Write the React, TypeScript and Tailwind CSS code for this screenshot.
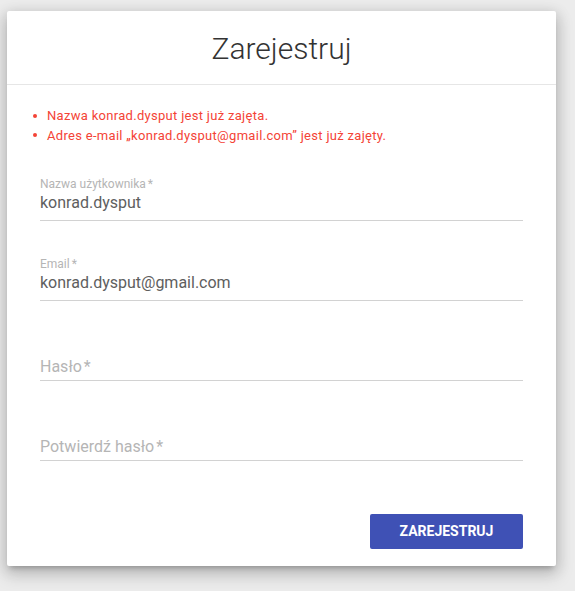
const font = { fontFamily: "Roboto, 'Liberation Sans', sans-serif" };

interface FieldProps {
  label: string;
  value?: string;
}

function Field({ label, value }: FieldProps) {
  if (!value) {
    return (
      <div className="border-b border-[#d2d2d2] pb-[5px]">
        <div className="h-[38px] flex items-end">
          <span className="text-[16px] leading-[16px] text-[#b5b5b5]">
            {label}
            <span className="ml-[2px]">*</span>
          </span>
        </div>
      </div>
    );
  }
  return (
    <div className="border-b border-[#d2d2d2] pb-[5px]">
      <div className="text-[12px] leading-[14px] text-[#b5b5b5]">
        {label}
        <span className="ml-[2px]">*</span>
      </div>
      <div className="text-[16px] leading-[24px] text-[#5e5e5e]">{value}</div>
    </div>
  );
}

export default function App() {
  return (
    <div className="h-screen bg-[#ececec] pt-[11px] pl-[7px]" style={font}>
      <div className="w-[549px] h-[555px] bg-white rounded-[2px] shadow-[0_8px_17px_2px_rgba(0,0,0,0.14),0_3px_14px_2px_rgba(0,0,0,0.12),0_5px_5px_-3px_rgba(0,0,0,0.2)] flex flex-col">
        <div className="h-[74px] border-b border-[#e6e6e6] pt-[19px] text-center">
          <h1 className="text-[30px] leading-[38px] font-light text-[#333333]">
            Zarejestruj
          </h1>
        </div>

        <div className="px-[33px] pt-[21px] flex flex-col">
          <ul className="text-[13px] leading-[19.5px] tracking-[0.3px] text-[#f44336]">
            <li className="flex items-center">
              <span className="w-[4px] h-[4px] rounded-full bg-[#f44336] ml-[-7px] mr-[10px]" />
              Nazwa konrad.dysput jest już zajęta.
            </li>
            <li className="flex items-center">
              <span className="w-[4px] h-[4px] rounded-full bg-[#f44336] ml-[-7px] mr-[10px]" />
              Adres e-mail „konrad.dysput@gmail.com” jest już zajęty.
            </li>
          </ul>

          <div className="mt-[32px] flex flex-col gap-[36px]">
            <Field label="Nazwa użytkownika" value="konrad.dysput" />
            <Field label="Email" value="konrad.dysput@gmail.com" />
            <Field label="Hasło" />
            <Field label="Potwierdź hasło" />
          </div>

          <div className="mt-[53px] flex justify-end">
            <button className="h-[35px] w-[153px] rounded-[2px] bg-[#3f51b5] text-white text-[14px] font-bold uppercase">
              Zarejestruj
            </button>
          </div>
        </div>
      </div>
    </div>
  );
}
